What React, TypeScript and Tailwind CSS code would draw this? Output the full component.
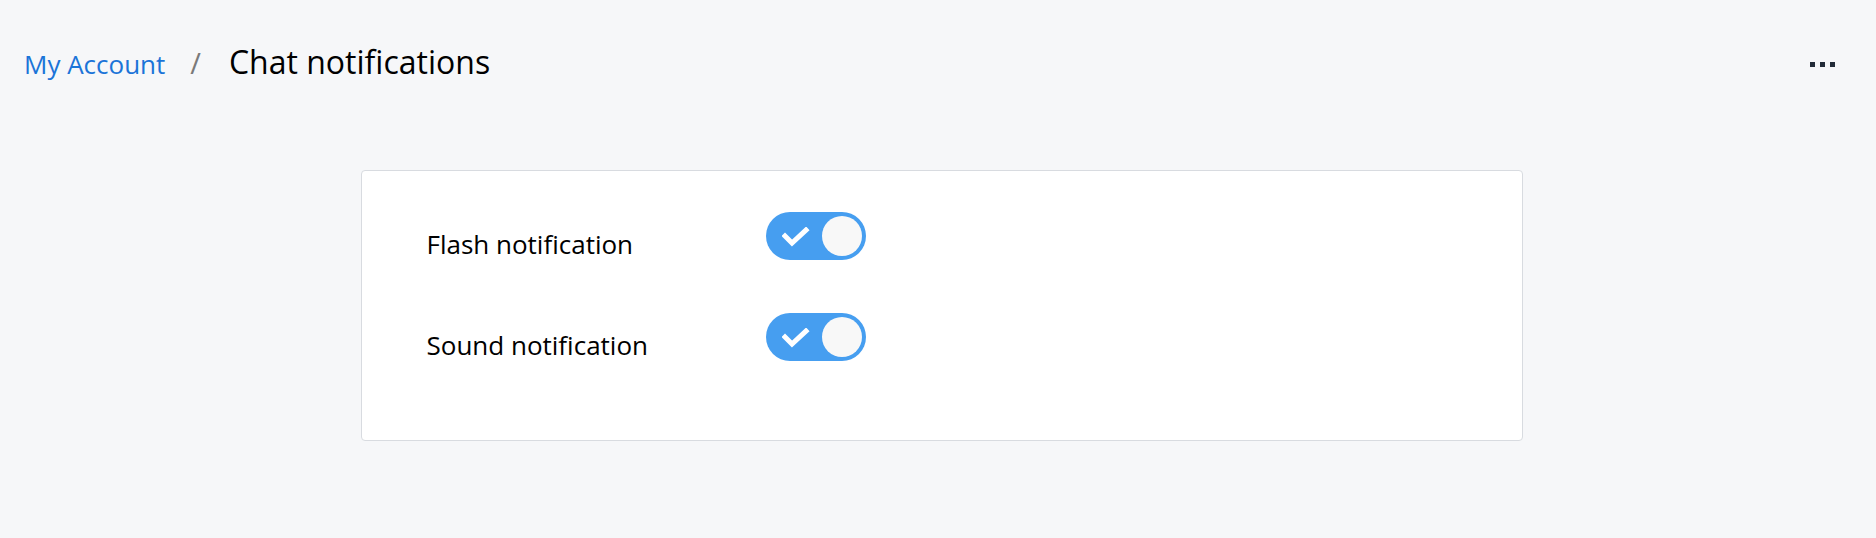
import React from "react";

function Toggle() {
  return (
    <div className="relative h-[48px] w-[100px] shrink-0 rounded-full bg-[#469ef0]">
      <svg className="absolute left-[16px] top-[15px]" width="28" height="20" viewBox="0 0 28 20">
        <polyline points="3,9 10,16 24,3" fill="none" stroke="#ffffff" strokeWidth="5" strokeLinecap="square" strokeLinejoin="miter" />
      </svg>
      <div className="absolute right-[4px] top-[4px] h-[40px] w-[40px] rounded-full bg-[#f8f8f8]" />
    </div>
  );
}

function Row({ label }: { label: string }) {
  return (
    <div className="flex items-start">
      <span className="w-[339px] pt-[17px] text-[26px] leading-[30px] text-black">{label}</span>
      <Toggle />
    </div>
  );
}

export default function App() {
  return (
    <div className="h-[538px] w-full overflow-hidden bg-[#f6f7f9] pt-[42px]" style={{ fontFamily: '"Open Sans", "Noto Sans", sans-serif' }}>
      <div className="flex h-[40px] items-center justify-between pl-[24px] pr-[41px]">
        <div className="flex h-[40px] items-baseline leading-[40px]">
          <span className="text-[26px] text-[#1b74d8]">My Account</span>
          <span className="ml-[25px] mr-[28px] text-[29px] text-[#7a7a7a]">/</span>
          <span className="text-[32px] text-black">Chat notifications</span>
        </div>
        <div className="mt-[4px] flex gap-[5px]">
          <span className="h-[5px] w-[5px] bg-[#222b38]" />
          <span className="h-[5px] w-[5px] bg-[#222b38]" />
          <span className="h-[5px] w-[5px] bg-[#222b38]" />
        </div>
      </div>
      <div className="flex justify-center pl-[7px] pt-[88px]">
        <div className="flex h-[271px] w-[1162px] flex-col gap-[53px] rounded-[4px] border border-[#d8dbe0] bg-white pl-[65px] pt-[41px]">
          <Row label="Flash notification" />
          <Row label="Sound notification" />
        </div>
      </div>
    </div>
  );
}
